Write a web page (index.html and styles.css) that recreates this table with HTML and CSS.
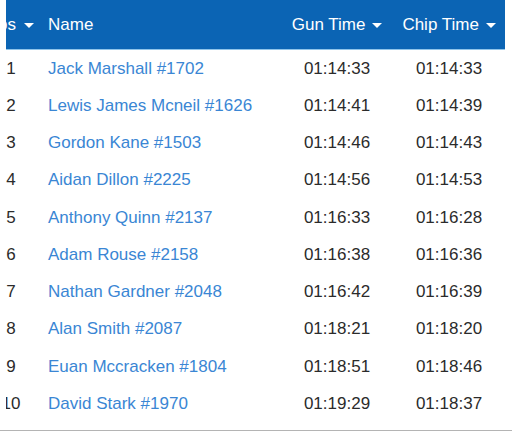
FILE: index.html
```html
<!DOCTYPE html>
<html>
<head>
<meta charset="utf-8">
<link rel="stylesheet" href="styles.css">
</head>
<body>
<div class="page">
  <div class="frame">
    <table class="results">
      <colgroup>
        <col class="c-pos"><col class="c-name"><col class="c-time"><col class="c-time">
      </colgroup>
      <thead>
        <tr>
          <th class="pos">Pos<span class="caret pos-caret"></span></th>
          <th class="name">Name</th>
          <th class="time">Gun Time <span class="caret"></span></th>
          <th class="time">Chip Time <span class="caret"></span></th>
        </tr>
      </thead>
      <tbody>
        <tr><td class="pos">1</td><td class="name"><a>Jack Marshall #1702</a></td><td class="time">01:14:33</td><td class="time">01:14:33</td></tr>
        <tr><td class="pos">2</td><td class="name"><a>Lewis James Mcneil #1626</a></td><td class="time">01:14:41</td><td class="time">01:14:39</td></tr>
        <tr><td class="pos">3</td><td class="name"><a>Gordon Kane #1503</a></td><td class="time">01:14:46</td><td class="time">01:14:43</td></tr>
        <tr><td class="pos">4</td><td class="name"><a>Aidan Dillon #2225</a></td><td class="time">01:14:56</td><td class="time">01:14:53</td></tr>
        <tr><td class="pos">5</td><td class="name"><a>Anthony Quinn #2137</a></td><td class="time">01:16:33</td><td class="time">01:16:28</td></tr>
        <tr><td class="pos">6</td><td class="name"><a>Adam Rouse #2158</a></td><td class="time">01:16:38</td><td class="time">01:16:36</td></tr>
        <tr><td class="pos">7</td><td class="name"><a>Nathan Gardner #2048</a></td><td class="time">01:16:42</td><td class="time">01:16:39</td></tr>
        <tr><td class="pos">8</td><td class="name"><a>Alan Smith #2087</a></td><td class="time">01:18:21</td><td class="time">01:18:20</td></tr>
        <tr><td class="pos">9</td><td class="name"><a>Euan Mccracken #1804</a></td><td class="time">01:18:51</td><td class="time">01:18:46</td></tr>
        <tr><td class="pos">10</td><td class="name"><a>David Stark #1970</a></td><td class="time">01:19:29</td><td class="time">01:18:37</td></tr>
      </tbody>
    </table>
  </div>
</div>
</body>
</html>
```
FILE: styles.css
```css
html, body {
  margin: 0;
  padding: 0;
  background: #ffffff;
}
body {
  font-family: "Liberation Sans", Arial, sans-serif;
  font-size: 17px;
  color: #2b2b2b;
}
.page {
  width: 512px;
  height: 431px;
  border-bottom: 1px solid #b4b4b4;
  box-sizing: border-box;
  overflow: hidden;
}
.frame {
  margin-left: 6px;
  width: 499px;
  overflow: hidden;
}
.results {
  border-collapse: collapse;
  table-layout: fixed;
  width: 524px;
  margin-left: -25px;
}
.c-pos { width: 60px; }
.c-name { width: 240px; }
.c-time { width: 112px; }
thead th {
  background: #0b64b4;
  color: #ffffff;
  font-weight: normal;
  height: 49px;
  padding: 0;
  border-bottom: 1px solid #8fc4ea;
  white-space: nowrap;
}
th.pos { text-align: right; padding-right: 7px; }
th.name, td.name { text-align: left; padding-left: 7px; }
th.time, td.time { text-align: center; }
td.pos { text-align: center; }
td {
  height: 37.25px;
  padding: 0;
  white-space: nowrap;
}
td a {
  color: #3a86d4;
  text-decoration: none;
}
.caret {
  display: inline-block;
  width: 0;
  height: 0;
  border-left: 5px solid transparent;
  border-right: 5px solid transparent;
  border-top: 5px solid #ffffff;
  vertical-align: middle;
  margin-left: 2px;
}
.pos-caret {
  margin-left: 8px;
}
```
